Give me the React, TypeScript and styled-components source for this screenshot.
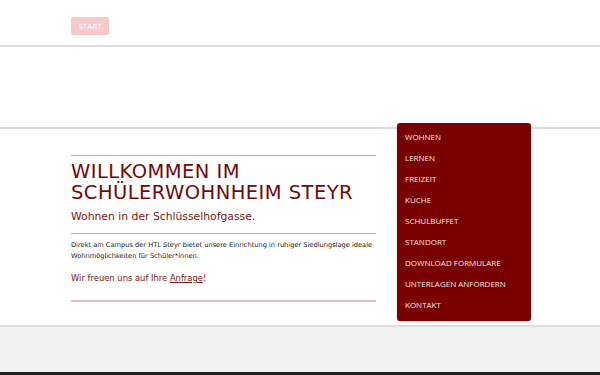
import React from "react";
import styled, { createGlobalStyle } from "styled-components";

const Global = createGlobalStyle`
  html, body { margin: 0; padding: 0; background: #fff; }
  body { font-family: "DejaVu Sans", Verdana, sans-serif; }
  * { box-sizing: border-box; }
`;

const Page = styled.div`
  width: 600px;
  height: 375px;
  overflow: hidden;
  display: flex;
  flex-direction: column;
`;

const Header = styled.header`
  height: 47px;
  border-bottom: 2px solid #dedede;
  padding: 14px 0 0 71px;
`;

const StartButton = styled.a`
  display: inline-flex;
  align-items: center;
  justify-content: center;
  width: 38px;
  height: 18px;
  background: #f6c9cb;
  color: #fff;
  border-radius: 2px;
  font-family: "Open Sans", sans-serif;
  font-size: 8px;
  text-decoration: none;
`;

const Band = styled.div`
  height: 82px;
  border-bottom: 2px solid #dedede;
`;

const Main = styled.main`
  position: relative;
  height: 198px;
  border-bottom: 2px solid #dedede;
  display: flex;
  padding: 0 0 0 71px;
`;

const Content = styled.section`
  width: 305px;
  padding-top: 26px;
`;

const Rule = styled.hr<{ $thick?: boolean }>`
  margin: 0;
  border: 0;
  height: ${(p) => (p.$thick ? 2 : 1)}px;
  background: ${(p) => (p.$thick ? "#e3c0c3" : "#c9a3a3")};
`;

const Title = styled.h1`
  margin: 5px 0 0;
  font-size: 19.5px;
  line-height: 21px;
  font-weight: normal;
  letter-spacing: 0.45px;
  color: #6e0b0b;
`;

const Subtitle = styled.h2`
  margin: 7px 0 9px;
  font-size: 10.8px;
  line-height: 14px;
  font-weight: normal;
  color: #7a1414;
`;

const Text = styled.p`
  margin: 6px 0 0;
  font-size: 6.65px;
  line-height: 11px;
  color: #222;
`;

const Invite = styled.p`
  margin: 10px 0 0;
  font-size: 8.4px;
  line-height: 12px;
  color: #7a1414;
  padding-bottom: 16px;
  a { color: #7a1414; text-decoration: underline; }
`;

const Menu = styled.nav`
  position: absolute;
  left: 397px;
  top: -6px;
  width: 134px;
  height: 198px;
  background: #780000;
  border-radius: 3px;
  box-shadow: 0 1px 2px rgba(0,0,0,0.2);
  display: flex;
  flex-direction: column;
  padding: 7px 0 0 8px;
`;

const MenuItem = styled.a`
  display: block;
  height: 21px;
  line-height: 13px;
  font-family: "Open Sans", sans-serif;
  font-size: 8px;
  color: #f5e4e4;
  text-decoration: none;
  text-transform: uppercase;
`;

const Footer = styled.footer`
  flex: 1;
  background: #f2f2f2;
  border-bottom: 3px solid #222;
`;

const items = [
  "Wohnen",
  "Lernen",
  "Freizeit",
  "Küche",
  "Schulbuffet",
  "Standort",
  "Download Formulare",
  "Unterlagen anfordern",
  "Kontakt",
];

export default function App() {
  return (
    <Page>
      <Global />
      <Header>
        <StartButton href="#">START</StartButton>
      </Header>
      <Band />
      <Main>
        <Content>
          <Rule />
          <Title>
            WILLKOMMEN IM
            <br />
            SCHÜLERWOHNHEIM STEYR
          </Title>
          <Subtitle>Wohnen in der Schlüsselhofgasse.</Subtitle>
          <Rule />
          <Text>
            Direkt am Campus der HTL Steyr bietet unsere Einrichtung in ruhiger Siedlungslage ideale
            Wohnmöglichkeiten für Schüler*innen.
          </Text>
          <Invite>
            Wir freuen uns auf Ihre <a href="#">Anfrage</a>!
          </Invite>
          <Rule $thick />
        </Content>
        <Menu>
          {items.map((i) => (
            <MenuItem key={i} href="#">
              {i}
            </MenuItem>
          ))}
        </Menu>
      </Main>
      <Footer />
    </Page>
  );
}
